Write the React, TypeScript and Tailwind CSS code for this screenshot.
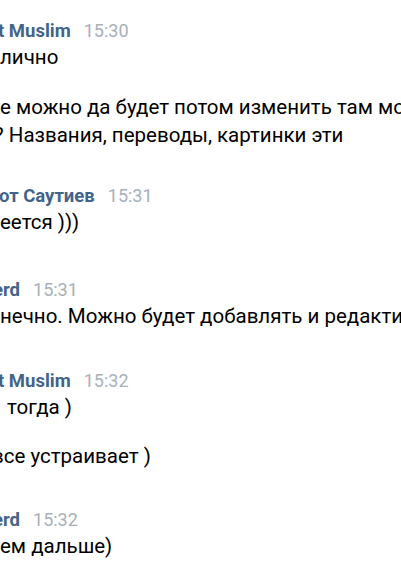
import React from "react";

const Name = ({ name, time, ml, mt }: { name: string; time: string; ml: string; mt: string }) => (
  <div className={`flex items-baseline whitespace-nowrap h-[24px] leading-[24px] ${mt}`}>
    <span className={`text-[18.5px] font-bold text-[#42648b] ${ml}`}>{name}</span>
    <span className="ml-[13px] text-[18px] text-[#a8b0ba]">{time}</span>
  </div>
);

const Line = ({ children, cls = "" }: { children: React.ReactNode; cls?: string }) => (
  <div className={`whitespace-nowrap text-[20.5px] leading-[28px] text-black ${cls}`}>{children}</div>
);

export default function App() {
  return (
    <div
      className="w-[401px] h-[580px] overflow-hidden bg-white flex flex-col"
      style={{ fontFamily: "Roboto, 'Noto Sans', sans-serif" }}
    >
      <Name name="t Muslim" time="15:30" ml="-ml-[2px]" mt="mt-[19px]" />
      <Line>лично</Line>
      <Line cls="mt-[22px]">е можно да будет потом изменить там может быть</Line>
      <Line cls="-ml-[6px]">? Названия, переводы, картинки эти</Line>

      <Name name="от Саутиев" time="15:31" ml="-ml-[1px]" mt="mt-[35px]" />
      <Line>еется )))</Line>

      <Name name="erd" time="15:31" ml="-ml-[7px]" mt="mt-[42px]" />
      <Line>нечно. Можно будет добавлять и редактировать</Line>

      <Name name="t Muslim" time="15:32" ml="-ml-[2px]" mt="mt-[39px]" />
      <Line cls="ml-[7px]">тогда )</Line>
      <Line cls="mt-[21px] -ml-[8px]">все устраивает )</Line>

      <Name name="erd" time="15:32" ml="-ml-[7px]" mt="mt-[38px]" />
      <Line>ем дальше)</Line>
    </div>
  );
}
